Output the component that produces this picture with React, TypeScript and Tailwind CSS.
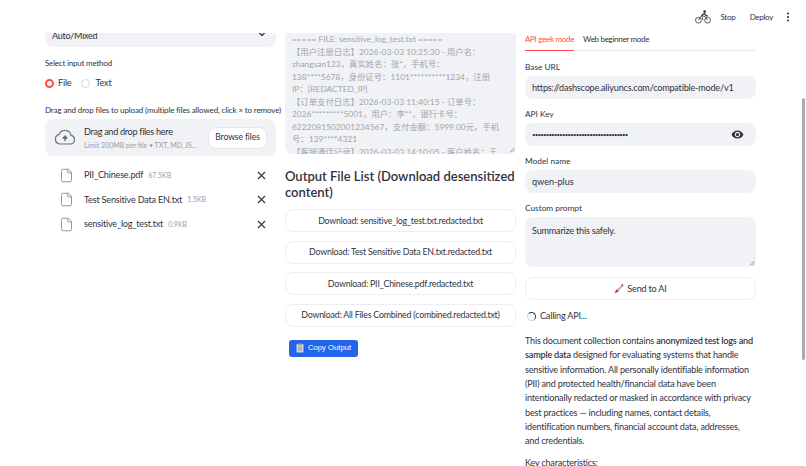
import React from 'react'
import { ChevronDown, EllipsisVertical, File, X } from 'lucide-react'

const logLines = [
  '===== FILE: sensitive_log_test.txt =====',
  '【用户注册日志】2026-03-03 10:25:30 - 用户名：',
  'zhangsan123，真实姓名：张*，手机号：',
  '138****5678，身份证号：1101**********1234，注册',
  'IP：[REDACTED_IP]',
  '【订单支付日志】2026-03-03 11:40:15 - 订单号：',
  '2026*********5001，用户：李**，银行卡号：',
  '6222081502001234567，支付金额：5999.00元，手机',
  '号：139****4321',
  '【客服通话记录】2026-03-03 14:10:05 - 客户姓名：王',
]

const files = [
  { name: 'PII_Chinese.pdf', size: '67.5KB' },
  { name: 'Test Sensitive Data EN.txt', size: '1.5KB' },
  { name: 'sensitive_log_test.txt', size: '0.9KB' },
]

const downloads = [
  'Download: sensitive_log_test.txt.redacted.txt',
  'Download: Test Sensitive Data EN.txt.redacted.txt',
  'Download: PII_Chinese.pdf.redacted.txt',
  'Download: All Files Combined (combined.redacted.txt)',
]

const Field = ({ label, children }: { label: string; children: React.ReactNode }) => (
  <div className="flex flex-col">
    <label className="h-[16px] text-[8.3px] leading-[14px] tracking-normal text-[#31333f]">{label}</label>
    {children}
  </div>
)

const App = () => {
  return (
    <div className="relative flex h-[466px] w-[806px] flex-col overflow-hidden bg-white font-['Lato','Noto_Sans_CJK_SC',sans-serif] tracking-[-0.2px] text-[#31333f]">
      <header className="flex h-[33px] shrink-0 items-center justify-end bg-white">
        <svg width="16" height="14" viewBox="0 0 16 14" fill="none" stroke="#31333f" strokeWidth="0.8" className="mr-[9px]">
          <circle cx="3.4" cy="10.2" r="2.9" />
          <circle cx="12.6" cy="10.2" r="2.9" />
          <path d="M3.4 10.2 6.6 5.6l3.4 1 2.6 3.6M6.6 5.6 8 10.2" />
          <circle cx="9.6" cy="1.6" r="1" fill="#31333f" />
          <path d="M6.6 5.6 9.4 3.4l1.6 2.2 1.8.4" strokeWidth="1.3" />
        </svg>
        <span className="mr-[14px] text-[8px]">Stop</span>
        <span className="mr-[9px] text-[8px] tracking-[-0.3px]">Deploy</span>
        <EllipsisVertical size={12} strokeWidth={2.4} className="mr-[12px] text-[#31333f]" />
      </header>

      <main className="flex min-h-0 flex-1 gap-[9px] overflow-hidden pl-[45px]">
        <section className="flex w-[231px] shrink-0 flex-col">
          <div className="flex h-[14px] items-end justify-between rounded-b-lg bg-[#f0f2f6] pb-[7px] pl-[7px] pr-[8px] text-[9.1px] leading-none tracking-[-0.3px]">
            <span>Auto/Mixed</span>
            <ChevronDown size={12} strokeWidth={2.4} />
          </div>

          <p className="mt-[9px] text-[8px] leading-[14px]">Select input method</p>
          <div className="mt-[5px] flex h-[16px] items-center text-[9.1px]">
            <span className="h-[9px] w-[9px] rounded-full border-[2.5px] border-[#ff4b4b] bg-white" />
            <span className="ml-[4px]">File</span>
            <span className="ml-[10px] h-[9px] w-[9px] rounded-full border border-[#d5d7dd] bg-white" />
            <span className="ml-[5px]">Text</span>
          </div>

          <p className="mt-[13px] text-[8px] leading-[12px] tracking-[-0.13px] whitespace-nowrap">
            Drag and drop files to upload (multiple files allowed, click × to remove)
          </p>
          <div className="mt-[3px] flex h-[37px] items-center rounded-lg bg-[#f0f2f6] pl-[9px] pr-[9px]">
            <svg width="22" height="15" viewBox="0 0 22 15" fill="none" stroke="#6c7080" strokeWidth="1.2">
              <path d="M5.6 14h10.6a4.4 4.4 0 0 0 .8-8.7A6.2 6.2 0 0 0 5.2 4.4 4.9 4.9 0 0 0 5.6 14Z" />
              <path d="M11 11V6.6M8.8 8.6 11 6.2l2.2 2.4" strokeWidth="1.5" />
            </svg>
            <div className="ml-[8px] flex min-w-0 flex-1 flex-col">
              <span className="text-[9.1px] leading-[14px] tracking-[-0.3px] whitespace-nowrap">Drag and drop files here</span>
              <span className="text-[7px] leading-[12px] tracking-normal whitespace-nowrap text-[#9a9ca6]">Limit 200MB per file • TXT, MD, JS...</span>
            </div>
            <button className="h-[22px] w-[59px] shrink-0 rounded-lg border border-[#e6e7eb] bg-white text-[8.6px] tracking-[-0.1px] whitespace-nowrap">Browse files</button>
          </div>

          <ul className="mt-[10px] flex flex-col gap-[6.5px] pl-[14px] pr-[8px]">
            {files.map((f) => (
              <li key={f.name} className="flex h-[18px] items-center">
                <File size={15} strokeWidth={1.5} className="text-[#8a8fa6]" />
                <span className="ml-[10px] text-[9.1px]">{f.name}</span>
                <span className="ml-[5px] text-[7px] tracking-normal text-[#9a9ca6]">{f.size}</span>
                <X size={13} strokeWidth={2} className="ml-auto" />
              </li>
            ))}
          </ul>
        </section>

        <section className="flex w-[231px] shrink-0 flex-col">
          <div className="relative h-[121px] shrink-0 overflow-hidden rounded-b-lg bg-[#f0f2f6] px-[7px] text-[8.4px] leading-[12.55px] tracking-normal whitespace-nowrap text-[#a3a5ab]">
            {logLines.map((line) => (
              <div key={line}>{line}</div>
            ))}
            <svg width="6" height="6" viewBox="0 0 6 6" stroke="#666" strokeWidth="0.7" className="absolute right-[1px] bottom-[1px]">
              <path d="M1 5.5 5.5 1M3.5 5.5l2-2" />
            </svg>
          </div>

          <h2 className="mt-[14px] text-[13px] leading-[16px] font-semibold tracking-normal">Output File List (Download desensitized content)</h2>

          <div className="mt-[9px] flex flex-col gap-[8.5px]">
            {downloads.map((d) => (
              <button key={d} className="h-[23px] rounded-lg border border-[#eceef1] bg-white text-[8.8px] whitespace-nowrap">{d}</button>
            ))}
          </div>

          <button className="mt-[13px] ml-[4px] flex h-[17px] w-[69px] items-center justify-center gap-[4px] rounded-[3px] bg-[#2463eb] font-['Liberation_Sans',sans-serif] text-[7.7px] tracking-normal whitespace-nowrap text-white">
            <svg width="8" height="10" viewBox="0 0 8 10"><rect x="0.5" y="1" width="7" height="8.6" rx="0.8" fill="#cfd2d8" /><rect x="2.2" y="0.2" width="3.6" height="1.8" fill="#8a8f99" /><path d="M2 4h4M2 5.6h4M2 7.2h4" stroke="#7b808b" strokeWidth="0.6" /></svg>
            Copy Output
          </button>
        </section>

        <section className="flex w-[231px] shrink-0 flex-col">
          <nav className="flex h-[18px] shrink-0 border-b border-[#e9eaee] text-[8px] leading-[12px] tracking-[-0.3px]">
            <span className="h-[18px] border-b border-[#ff4b4b] text-[#ff4b4b]">API geek mode</span>
            <span className="ml-[9px]">Web beginner mode</span>
          </nav>
          <div className="mt-[9px] flex flex-col gap-[8px]">
            <Field label="Base URL">
              <div className="flex h-[23px] items-center rounded-lg bg-[#f0f2f6] px-[7px] text-[9.1px] tracking-[-0.2px] whitespace-nowrap">https://dashscope.aliyuncs.com/compatible-mode/v1</div>
            </Field>
            <Field label="API Key">
              <div className="flex h-[23px] items-center justify-between rounded-lg bg-[#f0f2f6] pl-[7px] pr-[12px] text-[6px] tracking-[-0.75px]">
                <span>{'•'.repeat(35)}</span>
                <svg width="13" height="13" viewBox="0 0 24 24" fill="#31333f">
                  <path d="M12 4.5C7 4.5 2.73 7.61 1 12c1.73 4.39 6 7.5 11 7.5s9.27-3.11 11-7.5c-1.73-4.39-6-7.5-11-7.5zM12 17c-2.76 0-5-2.24-5-5s2.24-5 5-5 5 2.24 5 5-2.24 5-5 5zm0-8c-1.66 0-3 1.34-3 3s1.34 3 3 3 3-1.34 3-3-1.34-3-3-3z" />
                </svg>
              </div>
            </Field>
            <Field label="Model name">
              <div className="flex h-[23px] items-center rounded-lg bg-[#f0f2f6] px-[7px] text-[9.1px] tracking-normal">qwen-plus</div>
            </Field>
            <Field label="Custom prompt">
              <div className="relative h-[50px] rounded-lg bg-[#f0f2f6] px-[7px] pt-[7px] text-[9.1px] leading-[14px]">
                Summarize this safely.
                <svg width="6" height="6" viewBox="0 0 6 6" stroke="#666" strokeWidth="0.7" className="absolute right-[1px] bottom-[1px]">
                  <path d="M1 5.5 5.5 1M3.5 5.5l2-2" />
                </svg>
              </div>
            </Field>
          </div>
          <button className="mt-[10px] flex h-[23px] shrink-0 items-center justify-center gap-[3px] rounded-lg border border-[#eceef1] bg-white text-[9.1px]">
            <svg width="10" height="10" viewBox="0 0 10 10"><path d="M0.6 9.4 2.4 5.2l2.4 2.4Z" fill="#d9264f" /><path d="M2.8 5.4 7.4 1.4 9 1l-.4 1.6L4.6 7.2Z" fill="#a9b3c4" /><circle cx="8.4" cy="1.3" r="1" fill="#d9264f" /></svg>
            Send to AI
          </button>
          <div className="mt-[8px] flex h-[16px] shrink-0 items-center text-[9.1px]">
            <span className="ml-[2px] h-[9px] w-[9px] rounded-full border border-[#d0d2d8] border-t-[#31333f] border-r-[#31333f]" />
            <span className="ml-[4px]">Calling API...</span>
          </div>
          <div className="mt-[10px] text-[9.1px] leading-[14.35px] whitespace-nowrap">
            <p>This document collection contains <b className="font-semibold">anonymized test logs and</b></p>
            <p><b className="font-semibold">sample data</b> designed for evaluating systems that handle</p>
            <p>sensitive information. All personally identifiable information</p>
            <p>(PII) and protected health/financial data have been</p>
            <p>intentionally redacted or masked in accordance with privacy</p>
            <p>best practices — including names, contact details,</p>
            <p>identification numbers, financial account data, addresses,</p>
            <p>and credentials.</p>
            <p className="mt-[7px]">Key characteristics:</p>
          </div>
        </section>
      </main>

      <div className="absolute top-[98px] right-[1px] h-[262px] w-[3px] rounded-full bg-[#a9abb0]" />
    </div>
  )
}

export default App
